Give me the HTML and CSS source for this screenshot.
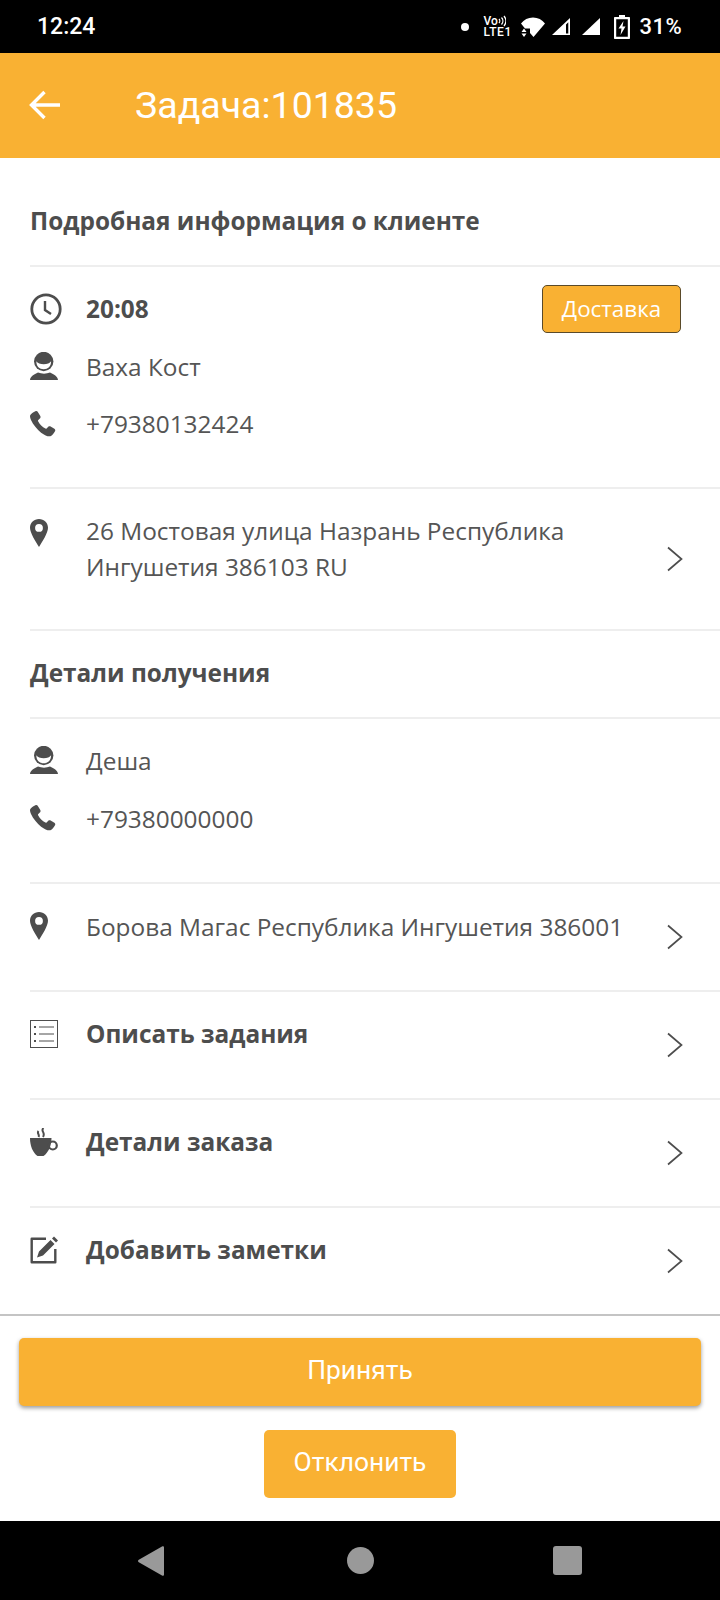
FILE: index.html
```html
<!DOCTYPE html>
<html lang="ru">
<head>
  <meta charset="utf-8">
  <title>Задача:101835</title>
  <link rel="stylesheet" href="styles.css">
</head>
<body>
  <svg class="defs" width="0" height="0">
    <defs>
      <symbol id="i-person" viewBox="0 0 28 28">
        <circle cx="13.700" cy="9.500" r="9.700" fill="#4d4d4d"/>
        <path fill="#fff" d="M6.300 9.300C8.500 13.300 19 13.300 21.100 9.300 21.100 14.500 18 17.300 13.700 17.300S6.300 14.500 6.300 9.300z"/>
        <path fill="#4d4d4d" d="M0 28c.5-4 4-5.500 8-7.500 3.500 1.500 8.500 1.500 12 0 4 2 7.500 3.500 8 7.500z"/>
      </symbol>
      <symbol id="i-phone" viewBox="0 0 26 26">
        <path fill="#4d4d4d" d="M5.400.3c.8-.5 1.800-.3 2.300.5l2.600 4.300c.4.700.3 1.500-.2 2.100L8.300 9c-.3.300-.4.800-.2 1.200 1.500 3 4.300 5.800 7.300 7.400.4.200.9.100 1.200-.2l1.900-1.800c.6-.5 1.400-.6 2.100-.2l3.800 2.400c.9.600 1.100 1.700.6 2.500-1.200 2-2.700 4.300-4.600 4.900-2 .6-5.300-.5-9.300-3.500C7.200 18.300 3 13.500 1 9 .1 7 -.2 5.500.2 4.300.7 2.800 3.600 1.300 5.400.3z"/>
      </symbol>
      <symbol id="i-pin" viewBox="0 0 18 28">
        <path fill="#4d4d4d" fill-rule="evenodd" d="M9 0c5 0 9 3.900 9 8.800 0 5-5.500 13.700-9 19.200C5.500 22.500 0 13.800 0 8.800 0 3.900 4 0 9 0zm0 5a3.900 3.900 0 1 0 0 7.800A3.900 3.900 0 0 0 9 5z"/>
      </symbol>
      <symbol id="i-chevron" viewBox="0 0 18 26">
        <path fill="none" stroke="#4d4d4d" stroke-width="1.700" d="M2 1.500 15.500 13 2 24.500"/>
      </symbol>
    </defs>
  </svg>

  <div class="statusbar">
    <span class="clock">12:24</span>
    <div class="status-icons">
      <span class="dot"></span>
      <span class="volte">
        <span class="vo">Vo<svg width="8" height="12" viewBox="0 0 8 12"><path fill="none" stroke="#fff" stroke-width="1.300" d="M1 4c1 1 1 3 0 4M3.500 2.500c1.800 2 1.800 5 0 7M6 1c2.400 3 2.400 7 0 10"/></svg></span>
        <span class="lte">LTE1</span>
      </span>
      <svg class="ic-wifi" width="24" height="20" viewBox="0 0 24 20">
        <path fill="#fff" d="M0 6.500C3 2.800 7 .5 12 .5s9 2.300 12 6L12.500 20 9 16V11.500H4z"/>
        <path fill="#fff" d="M.5 15 3 11.500 5.500 15zM.5 16.500H5.500L3 20z"/>
      </svg>
      <svg class="ic-signal" width="19" height="19" viewBox="0 0 19 19">
        <path fill="#fff" fill-rule="evenodd" d="M0 18 18 1v17zM16.300 5.200l-2.300 2.200v9h2.300z"/>
      </svg>
      <svg class="ic-signal second" width="19" height="19" viewBox="0 0 19 19">
        <path fill="#fff" d="M0 18 18 1v17z"/>
      </svg>
      <svg class="ic-battery" width="16" height="24" viewBox="0 0 16 24">
        <path fill="#fff" fill-rule="evenodd" d="M5 0h6v2h4c.6 0 1 .4 1 1v20c0 .6-.4 1-1 1H1c-.6 0-1-.4-1-1V3c0-.6.4-1 1-1h4zM2.200 4.200v17.600h11.600V4.200z"/>
        <path fill="#fff" d="M9.500 6 4.500 13.500h3L6.500 20 11.500 11.500H8.500z"/>
      </svg>
      <span class="percent">31%</span>
    </div>
  </div>

  <header class="topbar">
    <svg class="back" width="32" height="30" viewBox="0 0 32 30">
      <path fill="none" stroke="#fff" stroke-width="3.400" d="M31 15H3M15.500 2 2.500 15l13 13"/>
    </svg>
    <h1>Задача:101835</h1>
  </header>

  <main class="content">
    <h2 class="heading first">Подробная информация о клиенте</h2>

    <section class="block contact-block">
      <div class="row">
        <svg class="icon" width="32" height="32" viewBox="0 0 32 32">
          <circle cx="16" cy="16" r="14.200" fill="none" stroke="#4d4d4d" stroke-width="2.800"/>
          <path fill="none" stroke="#4d4d4d" stroke-width="2.400" d="M15 8v9l6 4"/>
        </svg>
        <strong>20:08</strong>
        <span class="tag">Доставка</span>
      </div>
      <div class="row">
        <svg class="icon" width="28" height="28"><use href="#i-person"/></svg>
        <span>Ваха Кост</span>
      </div>
      <div class="row">
        <svg class="icon" width="26" height="26"><use href="#i-phone"/></svg>
        <span>+79380132424</span>
      </div>
    </section>

    <section class="block link-row address">
      <svg class="icon" width="18" height="28"><use href="#i-pin"/></svg>
      <p>26 Мостовая улица Назрань Республика Ингушетия 386103 RU</p>
      <svg class="chevron" width="18" height="26"><use href="#i-chevron"/></svg>
    </section>

    <h2 class="heading">Детали получения</h2>

    <section class="block contact-block short">
      <div class="row">
        <svg class="icon" width="28" height="28"><use href="#i-person"/></svg>
        <span>Деша</span>
      </div>
      <div class="row">
        <svg class="icon" width="26" height="26"><use href="#i-phone"/></svg>
        <span>+79380000000</span>
      </div>
    </section>

    <section class="block link-row">
      <svg class="icon" width="18" height="28"><use href="#i-pin"/></svg>
      <p>Борова Магас Республика Ингушетия 386001</p>
      <svg class="chevron" width="18" height="26"><use href="#i-chevron"/></svg>
    </section>

    <section class="block link-row">
      <svg class="icon" width="28" height="28" viewBox="0 0 28 28">
        <rect x=".5" y=".5" width="27" height="27" fill="none" stroke="#4d4d4d"/>
        <path fill="none" stroke="#4d4d4d" d="M9 7h15M9 14h15M9 21h15"/>
        <path fill="none" stroke="#4d4d4d" stroke-width="2" d="M4 7h2M4 14h2M4 21h2"/>
      </svg>
      <p class="strong">Описать задания</p>
      <svg class="chevron" width="18" height="26"><use href="#i-chevron"/></svg>
    </section>

    <section class="block link-row">
      <svg class="icon" width="28" height="28" viewBox="0 0 28 28">
        <path fill="#4d4d4d" d="M0 10h21.500c0 8-3.500 15-8 18h-6C3 25 0 18 0 10z"/>
        <circle cx="22.800" cy="17.500" r="4" fill="none" stroke="#4d4d4d" stroke-width="2.200"/>
        <path fill="none" stroke="#4d4d4d" stroke-width="2" d="M13.500 0c-3.500 3 2.500 4.500-.5 9M8.500 3c-2 2.300 1.500 3.500 0 6"/>
      </svg>
      <p class="strong">Детали заказа</p>
      <svg class="chevron" width="18" height="26"><use href="#i-chevron"/></svg>
    </section>

    <section class="block link-row">
      <svg class="icon" width="28" height="28" viewBox="0 0 28 28">
        <path fill="none" stroke="#4d4d4d" stroke-width="2.400" stroke-linejoin="round" d="M16 2.700H1.700v23.600h23.600V13"/>
        <path fill="#4d4d4d" d="M7 21.500l2-6L20.500 4l4 4L13 19.500zM22 2.500 24 .5 28 4.500 26 6.500z"/>
      </svg>
      <p class="strong">Добавить заметки</p>
      <svg class="chevron" width="18" height="26"><use href="#i-chevron"/></svg>
    </section>
  </main>

  <footer class="actions">
    <button class="btn accept">Принять</button>
    <button class="btn decline">Отклонить</button>
  </footer>

  <nav class="navbar">
    <svg width="26" height="30" viewBox="0 0 26 30"><path fill="#999" d="M26 1.500V28.500c0 1.200-1 1.800-2 1L.8 16.200c-1-.6-1-1.800 0-2.400L24 .5c1-.8 2-.2 2 1z"/></svg>
    <span class="nav-circle"></span>
    <span class="nav-square"></span>
  </nav>
</body>
</html>
```

FILE: styles.css
```css
* {
  box-sizing: border-box;
}
body {
  margin: 0;
  height: 1600px;
  display: flex;
  flex-direction: column;
  background: #fff;
  color: #555;
  font-family: "Open Sans", sans-serif;
  font-size: 24.400px;
}
.defs {
  position: absolute;
}

.statusbar {
  height: 53px;
  flex: none;
  background: #000;
  color: #fff;
  font-family: Roboto, sans-serif;
  font-weight: 500;
  font-size: 23px;
  display: flex;
  align-items: center;
  justify-content: space-between;
  padding: 0 38px 0 37px;
}
.status-icons {
  display: flex;
  align-items: center;
}
.dot {
  width: 8px;
  height: 8px;
  border-radius: 50%;
  background: #fff;
  margin-right: 15px;
}
.volte {
  width: 28px;
  font-size: 12px;
  line-height: 11px;
  display: flex;
  flex-direction: column;
  margin-right: 9px;
}
.vo {
  display: flex;
  align-items: center;
  height: 11px;
}
.lte {
  letter-spacing: .6px;
}
.ic-wifi {
  margin-right: 7px;
}
.ic-signal {
  margin-right: 11px;
}
.ic-signal.second {
  margin-right: 13px;
}
.ic-battery {
  margin-right: 10px;
}
.percent {
  font-size: 22px;
  letter-spacing: .4px;
}

.topbar {
  height: 105px;
  flex: none;
  background: #f9b133;
  display: flex;
  align-items: center;
  padding: 0 0 2px 29px;
}
.topbar h1 {
  margin: 0 0 0 74px;
  color: #fff;
  font-family: Roboto, sans-serif;
  font-weight: 400;
  font-size: 37.500px;
}

.content {
  flex: 1;
  display: flex;
  flex-direction: column;
}
.heading {
  margin: 0 0 0 30px;
  color: #4d4d4d;
  font-size: 24.400px;
  font-weight: 700;
  height: 88px;
  padding-top: 25px;
  line-height: 33px;
  border-top: 2px solid #eee;
}
.heading.first {
  height: 107px;
  padding-top: 46px;
  border-top: none;
}
.block {
  margin-left: 30px;
  border-top: 2px solid #eee;
}
.contact-block {
  height: 222px;
  padding-top: 13px;
}
.contact-block.short {
  height: 165px;
  padding-top: 12px;
}
.row {
  height: 57.500px;
  display: flex;
  align-items: center;
}
.short .row {
  height: 58px;
}
.row strong {
  font-weight: 700;
  color: #4d4d4d;
}
.icon {
  flex: none;
  margin-right: 28px;
}
.row .icon[width="32"] {
  margin-right: 24px;
}
.row .icon[width="26"] {
  margin-right: 30px;
}
.tag {
  margin-left: auto;
  margin-right: 39px;
  width: 139px;
  height: 48px;
  background: #f9b133;
  border: 1px solid #5a4a2a;
  border-radius: 5px;
  color: #fff;
  font-size: 22.400px;
  display: flex;
  align-items: center;
  justify-content: center;
}
.link-row {
  height: 108px;
  display: flex;
  align-items: flex-start;
  padding-top: 28px;
}
.link-row .icon[width="18"] {
  margin-right: 38px;
}
.link-row p {
  margin: -3px 0 0;
  flex: 1;
  line-height: 36px;
}
.link-row p.strong {
  margin-top: -4px;
  font-weight: 700;
  color: #4d4d4d;
}
.address {
  height: 142px;
  padding-top: 30px;
}
.address p {
  margin-top: -6px;
}
.chevron {
  flex: none;
  margin: 12px 36px 0 18px;
}
.address .chevron {
  margin-top: 27px;
}

.actions {
  flex: none;
  height: 207px;
  border-top: 2px solid #c4c4c4;
  display: flex;
  flex-direction: column;
  align-items: center;
  padding: 22px 19px 0;
}
.btn {
  border: none;
  background: #f9b133;
  color: #fff;
  font-family: Roboto, sans-serif;
  font-size: 26.400px;
  height: 68px;
  border-radius: 5px;
  padding: 0 0 5px;
}
.accept {
  width: 100%;
  box-shadow: 0 2px 4px rgba(0, 0, 0, .4);
}
.decline {
  width: 192px;
  margin-top: 24px;
}

.navbar {
  flex: none;
  height: 79px;
  background: #000;
  display: flex;
  align-items: center;
  padding: 0 0 0 138px;
}
.nav-circle {
  width: 27px;
  height: 27px;
  border-radius: 50%;
  background: #999;
  margin-left: 183px;
}
.nav-square {
  width: 29px;
  height: 29px;
  border-radius: 3px;
  background: #999;
  margin-left: 179px;
}
```
